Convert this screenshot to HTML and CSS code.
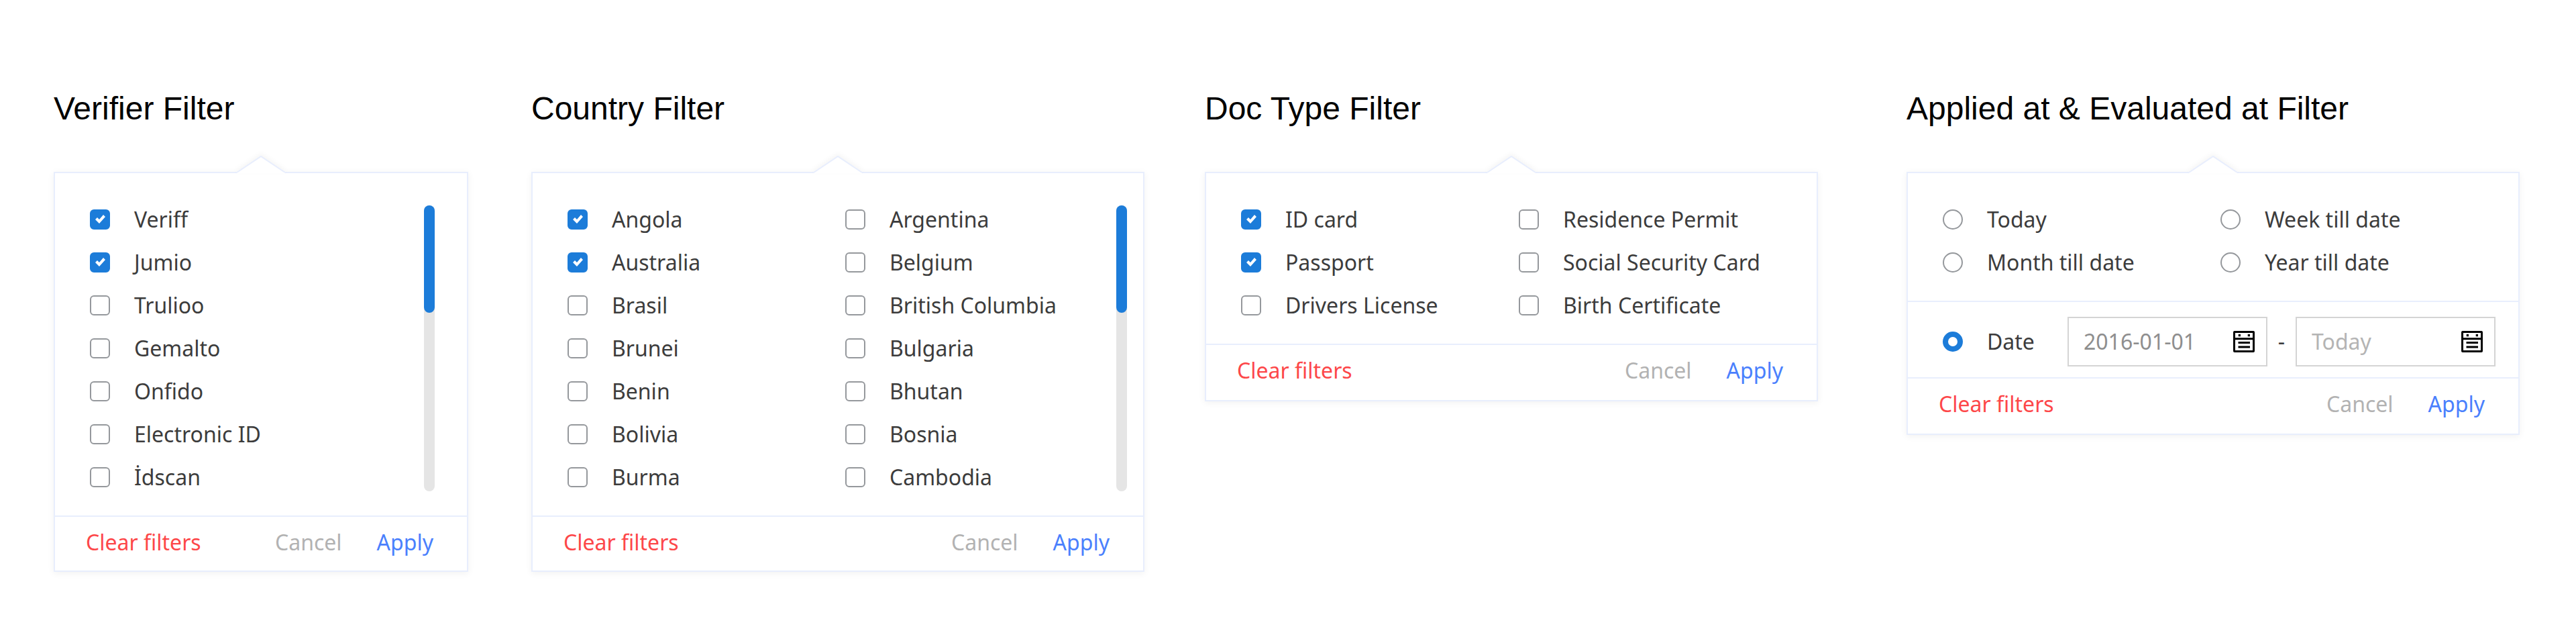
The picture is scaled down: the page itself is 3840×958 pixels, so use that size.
FILE: index.html
```html
<!DOCTYPE html>
<html lang="en">
<head>
<meta charset="utf-8">
<title>Filters</title>
<link rel="stylesheet" href="styles.css">
</head>
<body>
<main class="board">
  <section class="filter filter-narrow">
    <h2 class="filter-title">Verifier Filter</h2>
    <form class="panel">
      <svg class="arrow" viewBox="0 0 72 26" aria-hidden="true"><path class="arrow-fill" d="M0 26V25L36 1L72 25V26Z"/><path class="arrow-line" d="M0 25L36 1L72 25"/></svg>
      <div class="panel-body panel-scroll">
        <div class="options">
          <label class="option"><input class="box" type="checkbox" checked>Veriff</label>
          <label class="option"><input class="box" type="checkbox" checked>Jumio</label>
          <label class="option"><input class="box" type="checkbox">Trulioo</label>
          <label class="option"><input class="box" type="checkbox">Gemalto</label>
          <label class="option"><input class="box" type="checkbox">Onfido</label>
          <label class="option"><input class="box" type="checkbox">Electronic ID</label>
          <label class="option"><input class="box" type="checkbox">İdscan</label>
        </div>
        <div class="track"><div class="thumb"></div></div>
      </div>
      <div class="actions">
        <button class="action action-clear" type="reset">Clear filters</button>
        <button class="action action-cancel" type="button">Cancel</button>
        <button class="action action-apply" type="button">Apply</button>
      </div>
    </form>
  </section>

  <section class="filter filter-country">
    <h2 class="filter-title">Country Filter</h2>
    <form class="panel">
      <svg class="arrow" viewBox="0 0 72 26" aria-hidden="true"><path class="arrow-fill" d="M0 26V25L36 1L72 25V26Z"/><path class="arrow-line" d="M0 25L36 1L72 25"/></svg>
      <div class="panel-body panel-scroll">
        <div class="options options-double">
          <label class="option"><input class="box" type="checkbox" checked>Angola</label>
          <label class="option"><input class="box" type="checkbox">Argentina</label>
          <label class="option"><input class="box" type="checkbox" checked>Australia</label>
          <label class="option"><input class="box" type="checkbox">Belgium</label>
          <label class="option"><input class="box" type="checkbox">Brasil</label>
          <label class="option"><input class="box" type="checkbox">British Columbia</label>
          <label class="option"><input class="box" type="checkbox">Brunei</label>
          <label class="option"><input class="box" type="checkbox">Bulgaria</label>
          <label class="option"><input class="box" type="checkbox">Benin</label>
          <label class="option"><input class="box" type="checkbox">Bhutan</label>
          <label class="option"><input class="box" type="checkbox">Bolivia</label>
          <label class="option"><input class="box" type="checkbox">Bosnia</label>
          <label class="option"><input class="box" type="checkbox">Burma</label>
          <label class="option"><input class="box" type="checkbox">Cambodia</label>
        </div>
        <div class="track"><div class="thumb"></div></div>
      </div>
      <div class="actions">
        <button class="action action-clear" type="reset">Clear filters</button>
        <button class="action action-cancel" type="button">Cancel</button>
        <button class="action action-apply" type="button">Apply</button>
      </div>
    </form>
  </section>

  <section class="filter filter-doc">
    <h2 class="filter-title">Doc Type Filter</h2>
    <form class="panel">
      <svg class="arrow" viewBox="0 0 72 26" aria-hidden="true"><path class="arrow-fill" d="M0 26V25L36 1L72 25V26Z"/><path class="arrow-line" d="M0 25L36 1L72 25"/></svg>
      <div class="panel-body">
        <div class="options options-double">
          <label class="option"><input class="box" type="checkbox" checked>ID card</label>
          <label class="option"><input class="box" type="checkbox">Residence Permit</label>
          <label class="option"><input class="box" type="checkbox" checked>Passport</label>
          <label class="option"><input class="box" type="checkbox">Social Security Card</label>
          <label class="option"><input class="box" type="checkbox">Drivers License</label>
          <label class="option"><input class="box" type="checkbox">Birth Certificate</label>
        </div>
      </div>
      <div class="actions">
        <button class="action action-clear" type="reset">Clear filters</button>
        <button class="action action-cancel" type="button">Cancel</button>
        <button class="action action-apply" type="button">Apply</button>
      </div>
    </form>
  </section>

  <section class="filter filter-date">
    <h2 class="filter-title">Applied at &amp; Evaluated at Filter</h2>
    <form class="panel">
      <svg class="arrow" viewBox="0 0 72 26" aria-hidden="true"><path class="arrow-fill" d="M0 26V25L36 1L72 25V26Z"/><path class="arrow-line" d="M0 25L36 1L72 25"/></svg>
      <div class="panel-body">
        <div class="options options-double">
          <label class="option"><input class="dot" type="radio" name="period">Today</label>
          <label class="option"><input class="dot" type="radio" name="period">Week till date</label>
          <label class="option"><input class="dot" type="radio" name="period">Month till date</label>
          <label class="option"><input class="dot" type="radio" name="period">Year till date</label>
        </div>
      </div>
      <div class="range">
        <label class="option range-option"><input class="dot" type="radio" name="period" checked>Date</label>
        <div class="field">
          <input class="field-input" type="text" value="2016-01-01" aria-label="From date">
          <svg class="calendar" viewBox="0 0 32 32" aria-hidden="true"><rect x="1.5" y="1.5" width="29" height="29" rx="0.5"/><path d="M1 11.7H31M7.5 17.5H25M7.5 24H25"/><path class="calendar-pins" d="M7.7 5H11V8.3H7.7ZM21.7 5H25V8.3H21.7Z"/></svg>
        </div>
        <span class="dash">-</span>
        <div class="field">
          <input class="field-input" type="text" placeholder="Today" aria-label="To date">
          <svg class="calendar" viewBox="0 0 32 32" aria-hidden="true"><rect x="1.5" y="1.5" width="29" height="29" rx="0.5"/><path d="M1 11.7H31M7.5 17.5H25M7.5 24H25"/><path class="calendar-pins" d="M7.7 5H11V8.3H7.7ZM21.7 5H25V8.3H21.7Z"/></svg>
        </div>
      </div>
      <div class="actions">
        <button class="action action-clear" type="reset">Clear filters</button>
        <button class="action action-cancel" type="button">Cancel</button>
        <button class="action action-apply" type="button">Apply</button>
      </div>
    </form>
  </section>
</main>
</body>
</html>
```
FILE: styles.css
```css
* {
  box-sizing: border-box;
}

body {
  margin: 0;
  background: #fff;
  color: #3c3c3c;
  font: 32px/40px "Noto Sans", "Open Sans", sans-serif;
}

.board {
  display: flex;
  align-items: flex-start;
  padding: 134px 84px 80px 80px;
}

.filter {
  flex: 914 1 0;
  min-width: 0;
}

.filter-narrow {
  flex-grow: 618;
}

.filter-country {
  margin-left: 94px;
}

.filter-doc {
  margin-left: 90px;
}

.filter-date {
  margin-left: 132px;
}

.filter-title {
  margin: 0 0 66px;
  color: #000;
  font: 400 48px/56px "Liberation Sans", Arial, sans-serif;
}

.panel {
  position: relative;
  border: 2px solid #e8eefd;
  background: #fff;
  box-shadow: 0 2px 10px rgba(0, 0, 0, 0.06);
}

.arrow {
  position: absolute;
  bottom: 100%;
  left: 50%;
  width: 72px;
  height: 26px;
  margin-left: -36px;
  overflow: visible;
  filter: drop-shadow(0 -3px 3px rgba(0, 0, 0, 0.04));
}

.arrow-fill {
  fill: #fff;
}

.arrow-line {
  fill: none;
  stroke: #e8eefd;
  stroke-width: 2;
}

.panel-body {
  padding: 48px 0 36px 52px;
}

.panel-scroll {
  display: flex;
  justify-content: space-between;
  padding-right: 48px;
}

.panel-scroll .options {
  flex: 1;
}

.filter-country .panel-scroll {
  padding-right: 24px;
}

.options {
  display: grid;
  row-gap: 22px;
}

.options-double {
  grid-template-columns: 414px 1fr;
}

.option {
  display: flex;
  align-items: center;
  gap: 36px;
  height: 42px;
  white-space: nowrap;
}

.box,
.dot {
  flex: none;
  appearance: none;
  width: 30px;
  height: 30px;
  margin: 0;
  border: 2px solid #95989c;
  border-radius: 6px;
  background: #fff;
}

.box:checked {
  border-color: #1c7cd9;
  background: #1c7cd9;
}

.box:checked::before {
  content: "";
  display: block;
  width: 100%;
  height: 100%;
  background: #fff;
  clip-path: polygon(6px 13px, 9px 10px, 12px 13px, 18px 6px, 21px 9px, 12px 19px);
}

.dot {
  border-radius: 50%;
}

.dot:checked {
  border: 8px solid #1c7cd9;
}

.track {
  width: 16px;
  border-radius: 8px;
  background: #e5e5e5;
}

.thumb {
  width: 16px;
  height: 160px;
  border-radius: 8px;
  background: #1c7cd9;
}

.range {
  display: flex;
  align-items: center;
  padding: 22px 34px 16px 52px;
  border-top: 2px solid #e8eefd;
}

.range-option {
  flex: none;
  width: 186px;
}

.field {
  flex: 1;
  display: flex;
  align-items: center;
  min-width: 0;
  height: 74px;
  padding: 0 17px 0 22px;
  border: 2px solid #d4d4d4;
}

.field-input {
  flex: 1;
  min-width: 0;
  padding: 0;
  border: 0;
  outline: 0;
  background: none;
  color: #8e8e8e;
  font: inherit;
}

.field-input::placeholder {
  color: #b4b4b4;
}

.calendar {
  flex: none;
  width: 32px;
  height: 32px;
  fill: none;
  stroke: #000;
  stroke-width: 3;
}

.calendar .calendar-pins {
  fill: #000;
  stroke: none;
}

.dash {
  width: 42px;
  text-align: center;
}

.actions {
  display: flex;
  align-items: center;
  padding: 18px 50px 24px 46px;
  border-top: 2px solid #e8eefd;
}

.panel-scroll + .actions {
  padding-bottom: 22px;
}

.action {
  padding: 0;
  border: 0;
  background: none;
  font: inherit;
  cursor: pointer;
}

.action-clear {
  margin-right: auto;
  color: #fd4749;
}

.action-cancel {
  margin-right: 52px;
  color: #b2b2b2;
}

.action-apply {
  color: #4a80fd;
}
```
